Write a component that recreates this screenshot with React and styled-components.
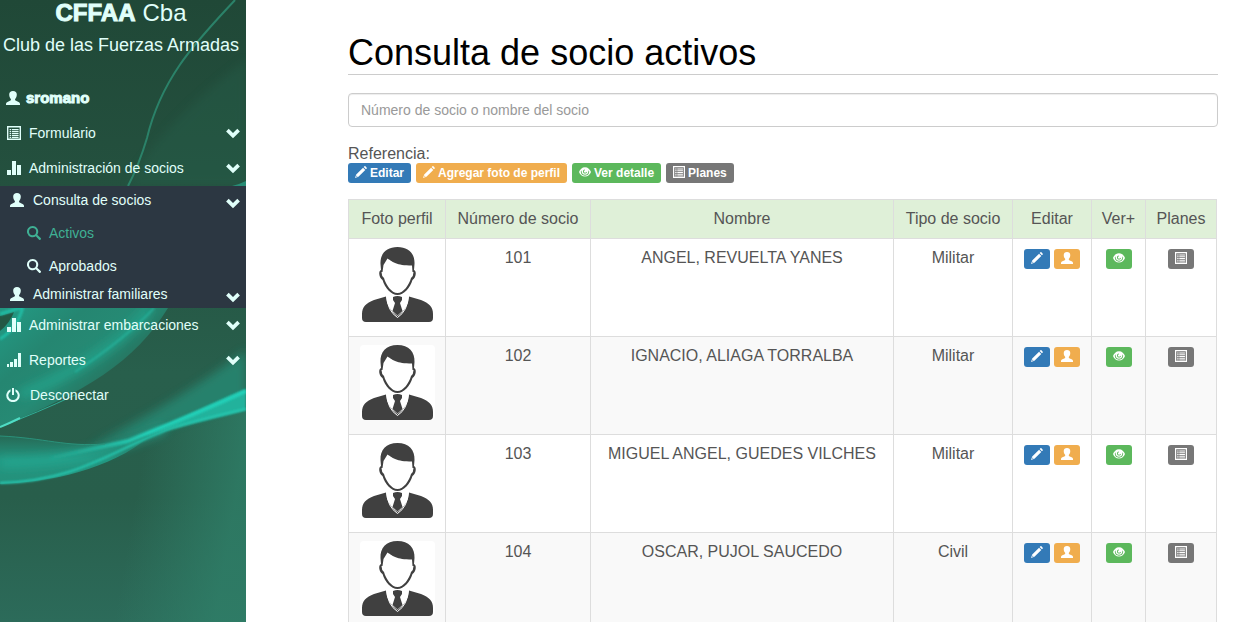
import React from "react";
import styled, { createGlobalStyle, css } from "styled-components";

const GlobalStyle = createGlobalStyle`
  *, *::before, *::after { box-sizing: border-box; }
  html, body { margin: 0; }
  body {
    font-family: "Liberation Sans", Arial, Helvetica, sans-serif;
    font-size: 16px;
    line-height: 22px;
    color: #555;
    background: #fff;
  }
`;

const Layout = styled.div`
  display: flex;
  height: 100vh;
  overflow: hidden;
`;

/* ---------- icons ---------- */

const Svg = styled.svg`
  display: block;
  flex: none;
  width: ${(p) => p.$size}px;
  height: ${(p) => p.$size}px;
  fill: currentColor;
`;

const shapes = {
  user: (
    <path d="M7 0C4.600 0 3.200 1.400 3.200 3.600c0 1.900.6 3.400 1.600 4.300.3.600.2 1.300-.4 1.600L1 11.200C.3 11.600 0 12.200 0 12.900V14h14v-1.100c0-.7-.3-1.300-1-1.700L9.600 9.500c-.6-.3-.7-1-.4-1.600 1-.9 1.600-2.400 1.600-4.300C10.800 1.400 9.400 0 7 0z" />
  ),
  list: (
    <path
      fillRule="evenodd"
      d="M0 0h14v14H0zM1.400 1.400v11.200h11.200V1.400zM2.600 3h1.600v1.200H2.600zM5 3h6.600v1.200H5zM2.600 5h1.600v1.200H2.600zM5 5h6.600v1.200H5zM2.600 7h1.600v1.200H2.600zM5 7h6.600v1.200H5zM2.600 9h1.600v1.200H2.600zM5 9h6.600v1.200H5zM2.600 11h1.600v1H2.600zM5 11h6.600v1H5z"
    />
  ),
  stats: <path d="M0 9h4v5H0zM5 0h4v14H5zM10 4h4v10h-4z" />,
  signal: <path d="M0 11h2v3H0zM3 9h3v5H3zM7 6h3v8H7zM11 0h3v14h-3z" />,
  search: (
    <path
      fillRule="evenodd"
      d="M5.600 0a5.600 5.600 0 1 0 3.200 10.200l3.300 3.500c.4.400.9.400 1.300 0l.3-.3c.4-.4.400-.9 0-1.300L10.200 8.800A5.600 5.600 0 0 0 5.600 0zm0 2a3.600 3.600 0 1 1 0 7.200 3.600 3.600 0 0 1 0-7.200z"
    />
  ),
  off: (
    <path d="M6 0h2v7H6zM4.500 1.200v2.200a4.700 4.700 0 1 0 5 0V1.200A6.700 6.700 0 1 1 4.500 1.200z" />
  ),
  chevron: <path d="M.1 5.400 2.700 2.800 7 7 11.300 2.800l2.600 2.600L7 12.200z" />,
  pencil: (
    <path d="M0 14l1.400-4L9.400 2l2.600 2.600-8 8zM10.100 1.300l1-1c.3-.3.700-.3 1 0l1.600 1.600c.3.300.3.700 0 1l-1 1zM2 11l-.7 1.700 1.700-.7z" />
  ),
  eye: (
    <path
      fillRule="evenodd"
      d="M7 1.500C3.700 1.500 1 4 0 7c1 3 3.700 5.300 7 5.300S13 10 14 7C13 4 10.300 1.500 7 1.500zM3 5.200C2.700 8.300 4.500 10.300 7 10.300s4.300-2 4-5.100l.8.600C12.200 9 10 11.300 7 11.300S1.800 9 2.200 5.800zM6.800 4.200C5.300 4.300 4.500 5.500 4.700 6.900c.4 1.300 1.200 1.800 2.300 1.800s1.900-.5 2.300-1.500L8.600 6.800C8.300 7.500 7.800 7.800 7 7.800 6.200 7.800 5.700 7.200 5.700 6.500 5.700 5.800 6.100 5.200 6.900 5.100z"
    />
  ),
};

const Icon = ({ name, size = 14 }) => (
  <Svg viewBox="0 0 14 14" $size={size} aria-hidden="true">
    {shapes[name]}
  </Svg>
);

/* ---------- sidebar ---------- */

const Sidebar = styled.aside`
  position: relative;
  flex: none;
  width: 246px;
  color: #e0fffa;
  background: #27604e;
  font-size: 14px;
`;

const Backdrop = styled.svg`
  position: absolute;
  inset: 0;
  width: 100%;
  height: 100%;
`;

const SidebarBody = styled.div`
  position: relative;
`;

const Brand = styled.header`
  height: 80px;
  text-align: center;
  white-space: nowrap;
`;

const BrandName = styled.h1`
  display: flex;
  justify-content: center;
  gap: 7px;
  margin: 0 4px 0 0;
  font-size: 24px;
  font-weight: 400;
  line-height: 26px;
`;

const Heavy = styled.strong`
  font-weight: 700;
  -webkit-text-stroke: 1px currentColor;
`;

const UserName = styled.strong`
  font-size: 15px;
  font-weight: 700;
  -webkit-text-stroke: 1px currentColor;
`;

const BrandLine = styled.p`
  margin: 8px 4px 0 0;
  font-size: 18px;
  line-height: 22px;
`;

const Menu = styled.ul`
  list-style: none;
  margin: 0;
  padding: 0;
`;

const SubMenu = styled(Menu)`
  margin: 1px 0 -1px;
  background: #2c3742;
`;

const entry = css`
  display: flex;
  align-items: center;
  gap: 8px;
  width: 100%;
  border: 0;
  margin: 0;
  background: none;
  color: inherit;
  font: inherit;
  line-height: 20px;
  text-align: left;
  text-decoration: none;
  cursor: pointer;
`;

const User = styled.div`
  ${entry}
  height: 35px;
  padding: 0 6px;
  gap: 6px;
  cursor: default;
`;

const MenuButton = styled.button`
  ${entry}
  height: 35px;
  padding: 0 6px 0 7px;
`;

const MenuLink = styled.a`
  ${entry}
  height: 35px;
  padding: 0 6px;
  gap: 10px;
`;

const SubButton = styled.button`
  ${entry}
  height: ${(p) => (p.$last ? 26 : 30)}px;
  padding: 0 6px 2px 10px;
  gap: 9px;
`;

const SubLink = styled.a`
  ${entry}
  height: 33px;
  padding: 0 6px 0 27px;
  gap: 8px;
  color: ${(p) => (p.$active ? "#3fb094" : "inherit")};
`;

const Caret = styled.span`
  margin-left: auto;
  padding-top: ${(p) => (p.$low ? 6 : 0)}px;
`;

const Wave = () => (
  <Backdrop viewBox="0 0 246 622" preserveAspectRatio="none" aria-hidden="true">
    <defs>
      <linearGradient id="base" x1="0" y1="0" x2="0" y2="1">
        <stop offset="0" stopColor="#204837" />
        <stop offset=".3" stopColor="#24513f" />
        <stop offset=".6" stopColor="#285f4c" />
        <stop offset=".8" stopColor="#285e4b" />
        <stop offset="1" stopColor="#2c6b5a" />
      </linearGradient>
      <linearGradient id="side" x1="0" y1="0" x2="1" y2="0.15">
        <stop offset=".6" stopColor="#2f8069" stopOpacity="0" />
        <stop offset="1" stopColor="#2f8069" stopOpacity=".75" />
      </linearGradient>
      <linearGradient id="glow" gradientUnits="userSpaceOnUse" x1="20" y1="310" x2="100" y2="400">
        <stop offset="0" stopColor="#239680" />
        <stop offset=".35" stopColor="#258671" />
        <stop offset=".65" stopColor="#268a74" />
        <stop offset="1" stopColor="#266f5b" />
      </linearGradient>
      <linearGradient id="low" x1="0" y1="0" x2="0" y2="1">
        <stop offset="0" stopColor="#266a56" />
        <stop offset=".5" stopColor="#249680" />
        <stop offset="1" stopColor="#24907a" />
      </linearGradient>
      <linearGradient id="fadeLeft" gradientUnits="userSpaceOnUse" x1="40" y1="0" x2="150" y2="0">
        <stop offset="0" stopColor="#24d0b8" stopOpacity="0" />
        <stop offset="1" stopColor="#24d0b8" />
      </linearGradient>
      <filter id="soft" x="-20%" y="-30%" width="140%" height="160%">
        <feGaussianBlur stdDeviation="5" />
      </filter>
      <filter id="fine" x="-10%" y="-20%" width="120%" height="140%">
        <feGaussianBlur stdDeviation="1" />
      </filter>
    </defs>
    <rect width="246" height="622" fill="url(#base)" />
    <path d="M246 60C205 90 150 140 128 186H246z" fill="#26624e" opacity=".35" filter="url(#soft)" />
    <path d="M100 460 178 428 246 408V622H0V590z" fill="url(#side)" />
    <path d="M235 0C200 38 162 75 147 138Q139 165 128 186" fill="none" stroke="#2b8269" strokeWidth="2" />
    <path d="M232 186Q240 184 246 181V186z" fill="#278c75" />

    <path d="M0 308H168C135 362 85 392 0 427z" fill="url(#glow)" />
    <path d="M20 395C80 370 118 345 150 308" fill="none" stroke="#22a890" strokeWidth="10" opacity=".7" filter="url(#soft)" />
    <path d="M75 372C105 352 132 332 154 308" fill="none" stroke="#25b9a3" strokeWidth="2" opacity=".7" filter="url(#fine)" />
    <path d="M0 427C25 417 50 407 75 395" fill="none" stroke="#2fae97" strokeWidth="1" />
    <path d="M0 427Q10 423 20 418" fill="none" stroke="#4fdcc4" strokeWidth="2" />
    <path d="M0 316 14 312Q10 323 0 331z" fill="#245844" />
    <path d="M0 339Q18 328 23 306M0 314 23 307" fill="none" stroke="#20bda5" strokeWidth="3" filter="url(#fine)" />

    <path d="M90 446C150 415 200 385 246 350V400L170 426z" fill="#278a75" opacity=".8" filter="url(#soft)" />
    <path d="M0 436C45 438 65 447 105 444L150 436C110 470 50 482 0 484z" fill="url(#low)" />
    <path d="M0 463C70 463 120 447 165 428" fill="none" stroke="#23ae98" strokeWidth="10" opacity=".6" filter="url(#soft)" />
    <path d="M110 448C150 436 200 408 246 389V410C205 422 165 427 110 448z" fill="#22b29c" filter="url(#fine)" />
    <path d="M246 391C205 410 165 426 128 441T50 458" fill="none" stroke="url(#fadeLeft)" strokeWidth="4" filter="url(#fine)" />
    <path d="M0 483C80 481 115 448 170 429Q205 418 246 409" fill="none" stroke="#25cbb3" strokeWidth="2" filter="url(#fine)" />
    <path d="M0 436C45 438 65 447 105 444" fill="none" stroke="#2a927b" strokeWidth="1" />
  </Backdrop>
);

/* ---------- content ---------- */

const Main = styled.main`
  flex: 1;
  min-width: 0;
  padding: 33px 36px 0 102px;
`;

const Title = styled.h2`
  margin: 0 0 18px;
  padding-bottom: 1px;
  border-bottom: 1px solid #ccc;
  font-size: 36px;
  font-weight: 400;
  line-height: 40px;
  color: #000;
`;

const SearchBox = styled.input`
  display: block;
  width: 100%;
  height: 34px;
  padding: 6px 12px;
  border: 1px solid #ccc;
  border-radius: 4px;
  font: inherit;
  font-size: 14px;
  color: #555;
  box-shadow: inset 0 1px 1px rgba(0, 0, 0, 0.075);
  &::placeholder { color: #999; opacity: 1; }
`;

const Legend = styled.div`
  margin: 18px 0 16px;
  line-height: 18px;
`;

const LegendItems = styled.div`
  display: flex;
  gap: 5px;
`;

const tones = { edit: "#337ab7", photo: "#f0ad4e", view: "#5cb85c", plans: "#777" };

const tag = css`
  display: inline-flex;
  align-items: center;
  gap: 3px;
  height: 20px;
  padding: 0 7px;
  border: 0;
  border-radius: 3px;
  background: ${(p) => tones[p.$tone]};
  color: #fff;
  font: bold 12px/20px "Liberation Sans", Arial, sans-serif;
  white-space: nowrap;

  ${Svg} {
    margin-bottom: 2px;
  }
`;

const Tag = styled.span`${tag}`;

const TagButton = styled.button`
  ${tag}
  cursor: pointer;
`;

const Actions = styled.div`
  display: flex;
  justify-content: center;
  gap: 4px;
  padding-top: 2px;
`;

const Table = styled.table`
  width: calc(100% - 1px);
  table-layout: fixed;
  border-collapse: collapse;
  text-align: center;
`;

const Col = styled.col`
  width: ${(p) => (p.$w ? `${p.$w}px` : "auto")};
`;

const HeadCell = styled.th`
  height: 39px;
  padding: 8px 0;
  border: 1px solid #ddd;
  background: #dff0d8;
  font-weight: 400;
  white-space: nowrap;
`;

const Row = styled.tr`
  height: 98px;
  background: ${(p) => (p.$striped ? "#f9f9f9" : "#fff")};
`;

const Cell = styled.td`
  padding: 8px;
  border: 1px solid #ddd;
  vertical-align: top;
`;

const Photo = styled.svg`
  display: block;
  width: 75px;
  height: 75px;
  margin: 0 auto;
  border-radius: 4px;
  background: #fff;
`;

const Avatar = () => (
  <Photo viewBox="0 0 75 75" role="img" aria-label="Foto perfil">
    <g fill="#404040">
      <path d="M37.500 0C26 0 20 7 20.500 17L21 23C18 24 19 31 22.500 33 25 41 31 48 37.500 48S50 41 52.500 33C56 31 57 24 54 23L54.500 17C55 7 49 0 37.500 0z" />
      <path d="M26 49.500 14 53C6 56 2 60 2 67V71Q2 75 6 75H69Q73 75 73 71V67C73 60 69 56 61 53L49 49.500Q48 62 37.500 69 27 62 26 49.500z" />
      <path d="M33 50Q37.500 48 42 50V53L40 56 42.500 64 37.500 68.500 32.500 64 35 56 33 53z" />
    </g>
    <path fill="#fff" d="M22.500 25 23.500 18 27.500 11.500C33 15 36 18.500 52 18.500L52.500 25 53.500 25Q53.500 29 51 31C49 38 43.500 46 37.500 46S26 38 24 31Q21.500 29 21.500 25z" />
    <path fill="none" stroke="#fff" strokeWidth="1" d="M26.500 49Q27.500 64 37.500 70.500 47.500 64 48.500 49" />
  </Photo>
);

const members = [
  { id: 101, name: "ANGEL, REVUELTA YANES", type: "Militar" },
  { id: 102, name: "IGNACIO, ALIAGA TORRALBA", type: "Militar" },
  { id: 103, name: "MIGUEL ANGEL, GUEDES VILCHES", type: "Militar" },
  { id: 104, name: "OSCAR, PUJOL SAUCEDO", type: "Civil" },
];

const columns = [
  ["Foto perfil", 97],
  ["Número de socio", 145],
  ["Nombre", 0],
  ["Tipo de socio", 119],
  ["Editar", 79],
  ["Ver+", 54],
  ["Planes", 71],
];

const MenuEntry = ({ icon, children }) => (
  <li>
    <MenuButton type="button">
      <Icon name={icon} />
      {children}
      <Caret><Icon name="chevron" /></Caret>
    </MenuButton>
  </li>
);

export default function App() {
  return (
    <Layout>
      <GlobalStyle />
      <Sidebar>
        <Wave />
        <SidebarBody>
          <Brand>
            <BrandName><Heavy>CFFAA</Heavy> <span>Cba</span></BrandName>
            <BrandLine>Club de las Fuerzas Armadas</BrandLine>
          </Brand>
          <User><Icon name="user" /><UserName>sromano</UserName></User>
          <nav>
            <Menu>
              <MenuEntry icon="list">Formulario</MenuEntry>
              <MenuEntry icon="stats">Administración de socios</MenuEntry>
              <li>
                <SubMenu>
                  <li>
                    <SubButton type="button">
                      <Icon name="user" />
                      Consulta de socios
                      <Caret $low><Icon name="chevron" /></Caret>
                    </SubButton>
                  </li>
                  <li><SubLink href="#activos" $active><Icon name="search" />Activos</SubLink></li>
                  <li><SubLink href="#aprobados"><Icon name="search" />Aprobados</SubLink></li>
                  <li>
                    <SubButton type="button" $last>
                      <Icon name="user" />
                      Administrar familiares
                      <Caret $low><Icon name="chevron" /></Caret>
                    </SubButton>
                  </li>
                </SubMenu>
              </li>
              <MenuEntry icon="stats">Administrar embarcaciones</MenuEntry>
              <MenuEntry icon="signal">Reportes</MenuEntry>
              <li><MenuLink href="#salir"><Icon name="off" />Desconectar</MenuLink></li>
            </Menu>
          </nav>
        </SidebarBody>
      </Sidebar>
      <Main>
        <Title>Consulta de socio activos</Title>
        <SearchBox
          type="text"
          aria-label="Número de socio o nombre del socio"
          placeholder="Número de socio o nombre del socio"
        />
        <Legend>
          Referencia:
          <LegendItems>
            <Tag $tone="edit"><Icon name="pencil" size={12} />Editar</Tag>
            <Tag $tone="photo"><Icon name="pencil" size={12} />Agregar foto de perfil</Tag>
            <Tag $tone="view"><Icon name="eye" size={12} />Ver detalle</Tag>
            <Tag $tone="plans"><Icon name="list" size={12} />Planes</Tag>
          </LegendItems>
        </Legend>
        <Table>
          <colgroup>
            {columns.map(([label, w]) => <Col key={label} $w={w} />)}
          </colgroup>
          <thead>
            <tr>{columns.map(([label]) => <HeadCell key={label} scope="col">{label}</HeadCell>)}</tr>
          </thead>
          <tbody>
            {members.map((m, i) => (
              <Row key={m.id} $striped={i % 2 === 1}>
                <Cell><Avatar /></Cell>
                <Cell>{m.id}</Cell>
                <Cell>{m.name}</Cell>
                <Cell>{m.type}</Cell>
                <Cell>
                  <Actions>
                    <TagButton type="button" $tone="edit" aria-label="Editar"><Icon name="pencil" size={12} /></TagButton>
                    <TagButton type="button" $tone="photo" aria-label="Agregar foto de perfil"><Icon name="user" size={12} /></TagButton>
                  </Actions>
                </Cell>
                <Cell>
                  <Actions>
                    <TagButton type="button" $tone="view" aria-label="Ver detalle"><Icon name="eye" size={12} /></TagButton>
                  </Actions>
                </Cell>
                <Cell>
                  <Actions>
                    <TagButton type="button" $tone="plans" aria-label="Planes"><Icon name="list" size={12} /></TagButton>
                  </Actions>
                </Cell>
              </Row>
            ))}
          </tbody>
        </Table>
      </Main>
    </Layout>
  );
}
